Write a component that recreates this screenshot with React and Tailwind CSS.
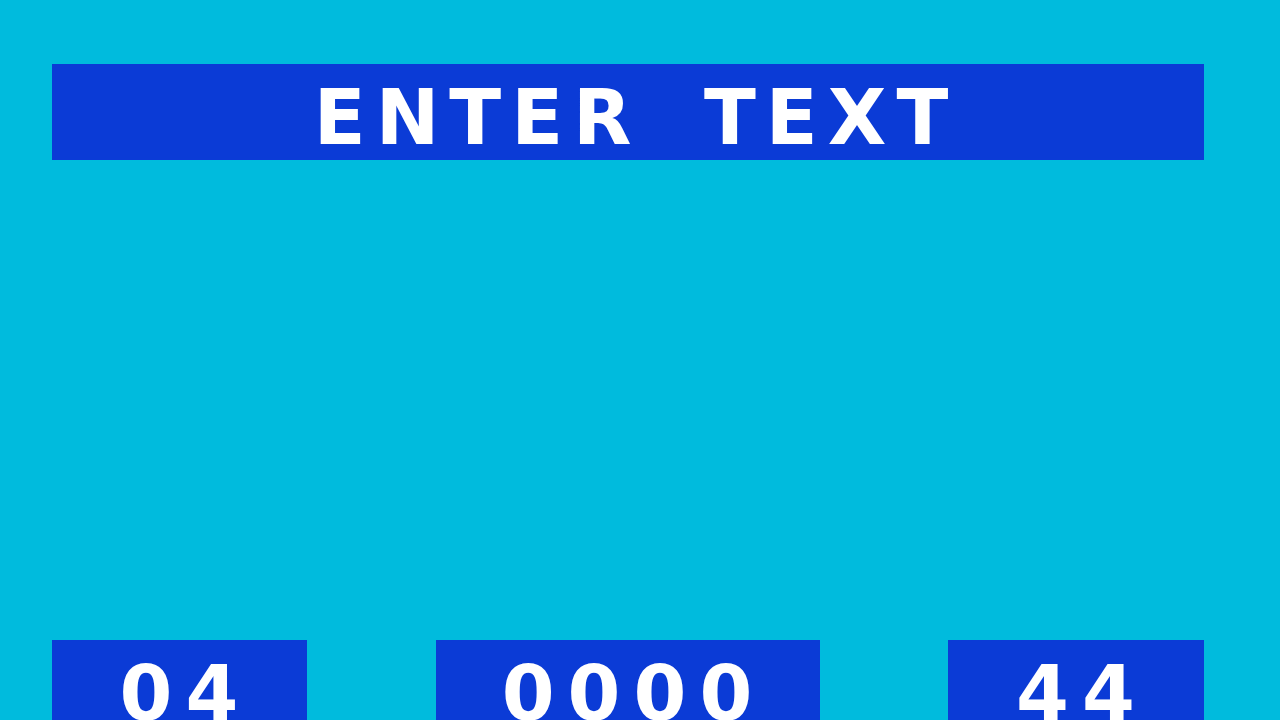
import React from 'react';

const pixel = { fontFamily: '"DejaVu Sans", "Liberation Sans", sans-serif' };

const Label = ({ children, className = '' }) => (
  <span
    className={`text-white font-bold text-[76px] leading-none ${className}`}
    style={pixel}
  >
    {children}
  </span>
);

const Box = ({ width, children }) => (
  <div className={`${width} h-[96px] bg-[#0b3bd6] flex justify-center pt-[16px] pl-[12px]`}>
    <Label className="tracking-[13px]">{children}</Label>
  </div>
);

const App = () => {
  return (
    <div className="w-[1280px] h-[720px] overflow-hidden bg-[#00bbdd] pl-[52px] pr-[76px] pt-[64px] flex flex-col">
      <div className="h-[96px] bg-[#0b3bd6] flex justify-center pt-[16px] pl-[16px]">
        <Label className="tracking-[10px] [word-spacing:26px]">ENTER TEXT</Label>
      </div>

      <div className="flex-1" />

      <div className="flex justify-between h-[80px]">
        <Box width="w-[255px]">04</Box>
        <Box width="w-[384px]">0000</Box>
        <Box width="w-[256px]">44</Box>
      </div>
    </div>
  );
};

export default App;
